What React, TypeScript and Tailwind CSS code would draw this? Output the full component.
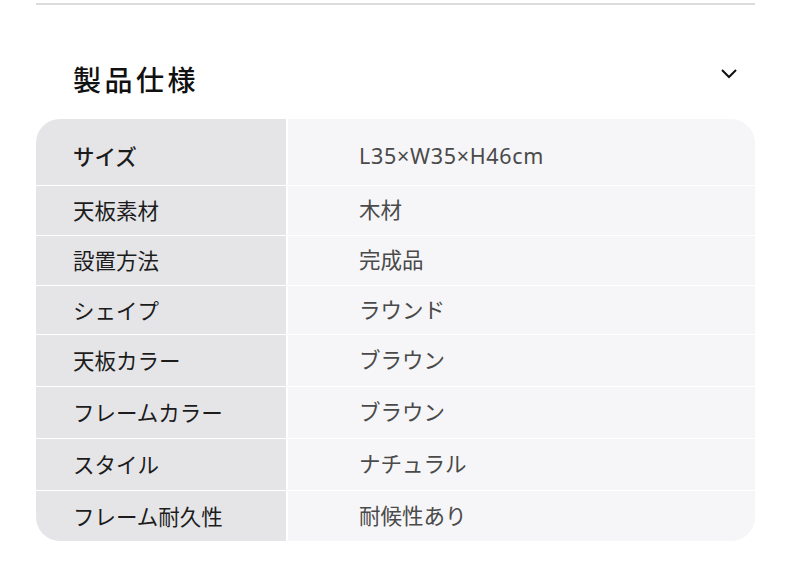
import React from "react";

const rows: { label: string; value: string; h: string; pad?: string; vt?: string }[] = [
  { label: "サイズ", value: "L35×W35×H46cm", h: "h-[67px]", pad: "pt-[9px]", vt: "tracking-[0.7px]" },
  { label: "天板素材", value: "木材", h: "h-[50px]" },
  { label: "設置方法", value: "完成品", h: "h-[50px]" },
  { label: "シェイプ", value: "ラウンド", h: "h-[49px]" },
  { label: "天板カラー", value: "ブラウン", h: "h-[52px]" },
  { label: "フレームカラー", value: "ブラウン", h: "h-[52px]" },
  { label: "スタイル", value: "ナチュラル", h: "h-[52px]" },
  { label: "フレーム耐久性", value: "耐候性あり", h: "h-[50px]" },
];

export default function App() {
  return (
    <div
      className="w-[790px] h-[572px] bg-white pl-[36px] pr-[35px] pt-[3px]"
      style={{ fontFamily: '"Noto Sans CJK JP", "Noto Sans", sans-serif' }}
    >
      <div className="h-[2px] bg-[#dcdcdc]" />
      <div className="flex items-start justify-between h-[114px] pl-[37px] pr-[17px]">
        <h2 className="mt-[60px] text-[28px] font-medium tracking-[3.5px] text-[#111] leading-[28px]">製品仕様</h2>
        <svg width="18" height="12" viewBox="0 0 18 12" className="mt-[62px]">
          <path d="M2 3 L9 10 L16 3" fill="none" stroke="#111" strokeWidth="2" />
        </svg>
      </div>
      <div className="rounded-[24px] overflow-hidden">
        {rows.map((r, i) => (
          <div
            key={i}
            className={`flex ${r.h} ${i < rows.length - 1 ? "border-b-[1.5px] border-white" : ""}`}
          >
            <div className={`w-[250px] bg-[#e5e5e8] flex items-center pl-[37px] text-[21.5px] text-[#1c1c1c] ${r.pad ?? ""}`}>
              <span className={i === 0 ? "font-medium" : ""}>{r.label}</span>
            </div>
            <div className="w-[2px] bg-white" />
            <div
              className={`flex-1 bg-[#f6f6f8] flex items-center pl-[71px] text-[21.5px] text-[#4a4a4a] ${r.pad ?? ""} ${r.vt ?? ""}`}
              style={{ fontFamily: '"Noto Sans", "Noto Sans CJK JP", sans-serif' }}
            >
              {r.value}
            </div>
          </div>
        ))}
      </div>
    </div>
  );
}
